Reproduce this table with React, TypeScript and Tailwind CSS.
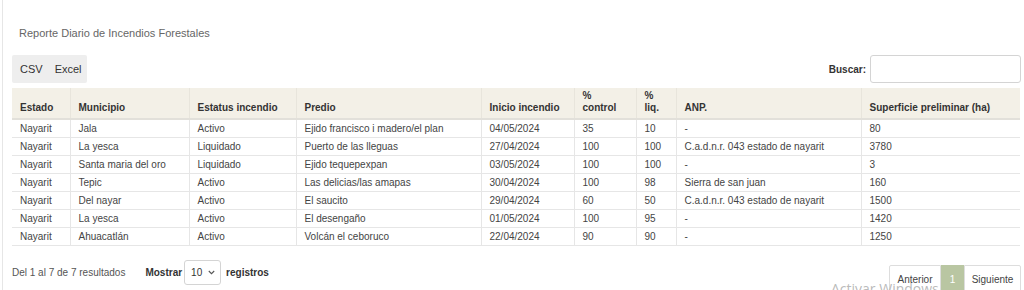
import React from "react";

const rows = [
  ["Nayarit", "Jala", "Activo", "Ejido francisco i madero/el plan", "04/05/2024", "35", "10", "-", "80"],
  ["Nayarit", "La yesca", "Liquidado", "Puerto de las lleguas", "27/04/2024", "100", "100", "C.a.d.n.r. 043 estado de nayarit", "3780"],
  ["Nayarit", "Santa maria del oro", "Liquidado", "Ejido tequepexpan", "03/05/2024", "100", "100", "-", "3"],
  ["Nayarit", "Tepic", "Activo", "Las delicias/las amapas", "30/04/2024", "100", "98", "Sierra de san juan", "160"],
  ["Nayarit", "Del nayar", "Activo", "El saucito", "29/04/2024", "60", "50", "C.a.d.n.r. 043 estado de nayarit", "1500"],
  ["Nayarit", "La yesca", "Activo", "El desengaño", "01/05/2024", "100", "95", "-", "1420"],
  ["Nayarit", "Ahuacatlán", "Activo", "Volcán el ceboruco", "22/04/2024", "90", "90", "-", "1250"],
];

export default function App() {
  return (
    <div
      className="relative w-[1024px] h-[290px] overflow-hidden bg-white text-[#333]"
      style={{ fontFamily: '"Liberation Sans", Arial, sans-serif' }}
    >
      <div className="relative z-10 ml-[2px] h-full border-l border-[#e6e6e6] pl-[9px] pr-[3px]">
        <div className="pt-[26px] pl-[7px] text-[11px] leading-[14px] text-[#666]">
          Reporte Diario de Incendios Forestales
        </div>
        <div className="mt-[15px] flex items-center justify-between">
          <div className="flex h-[28px] text-[11px] text-[#333]">
            <div className="flex items-center rounded-l-[2px] bg-[#eeeeee] pl-[8px] pr-[6px]">CSV</div>
            <div className="flex items-center rounded-r-[2px] bg-[#eeeeee] pl-[6px] pr-[5px]">Excel</div>
          </div>
          <div className="flex items-center gap-[4px]">
            <span className="text-[10px] font-bold">Buscar:</span>
            <div className="h-[28px] w-[151px] rounded-[3px] border border-[#d4d4d4] bg-white" />
          </div>
        </div>
        <table className="mt-[5px] w-[1008px] table-fixed border-collapse text-[10px]">
          <colgroup>
            <col className="w-[58px]" />
            <col className="w-[119px]" />
            <col className="w-[107px]" />
            <col className="w-[185px]" />
            <col className="w-[93px]" />
            <col className="w-[62px]" />
            <col className="w-[40px]" />
            <col className="w-[185px]" />
            <col className="w-[159px]" />
          </colgroup>
          <thead>
            <tr className="h-[28px] bg-[#f3f0e7]">
              {[
                "Estado",
                "Municipio",
                "Estatus incendio",
                "Predio",
                "Inicio incendio",
                "% control",
                "% liq.",
                "ANP.",
                "Superficie preliminar (ha)",
              ].map((h, i) => (
                <th
                  key={i}
                  className="border-b-2 border-b-[#e2e0da] border-l border-l-[#e8e5dc] first:border-l-0 px-[8px] pb-[4px] pt-[2px] text-left align-bottom font-bold leading-[12px] text-[#333] whitespace-nowrap"
                >
                  {h.startsWith("% ") ? (
                    <>
                      %<br />
                      {h.slice(2)}
                    </>
                  ) : (
                    h
                  )}
                </th>
              ))}
            </tr>
          </thead>
          <tbody>
            {rows.map((r, ri) => (
              <tr key={ri} className="h-[18px]">
                {r.map((c, ci) => (
                  <td
                    key={ci}
                    className="border-b border-b-[#e6e6e6] border-l border-l-[#e6e6e6] first:border-l-0 px-[8px] py-0 leading-[17px] text-[#444] whitespace-nowrap"
                  >
                    {c}
                  </td>
                ))}
              </tr>
            ))}
          </tbody>
        </table>
        <div className="mt-[14px] flex items-start justify-between">
          <div className="flex items-center">
            <span className="text-[10px] text-[#555]">Del 1 al 7 de 7 resultados</span>
            <span className="ml-[20px] text-[10px] font-bold text-[#333]">Mostrar</span>
            <div className="ml-[2px] flex h-[25px] w-[37px] items-center justify-between rounded-[3px] border border-[#d4d4d4] bg-white pl-[6px] pr-[5px] text-[10px]">
              <span>10</span>
              <svg width="7" height="5" viewBox="0 0 7 5" fill="none">
                <path d="M0.8 1 L3.5 3.7 L6.2 1" stroke="#555" strokeWidth="1.1" />
              </svg>
            </div>
            <span className="ml-[5px] text-[10px] font-bold text-[#333]">registros</span>
          </div>
          <div className="mt-[5px] flex h-[28px] text-[10px] text-[#444]">
            <div className="flex w-[52px] items-center justify-center rounded-l-[2px] border border-[#dddddd] bg-white">Anterior</div>
            <div className="flex w-[23px] items-center justify-center bg-[#b9c6a2] text-white">1</div>
            <div className="flex w-[57px] items-center justify-center rounded-r-[2px] border border-[#dddddd] bg-white">Siguiente</div>
          </div>
        </div>
      </div>
      <div
        className="pointer-events-none absolute left-[831px] top-[280px] z-20 text-[14px] leading-[18px] text-[#a8a8a8]/80"
        style={{ fontFamily: '"Open Sans", sans-serif' }}
      >
        Activar Windows
      </div>
    </div>
  );
}
